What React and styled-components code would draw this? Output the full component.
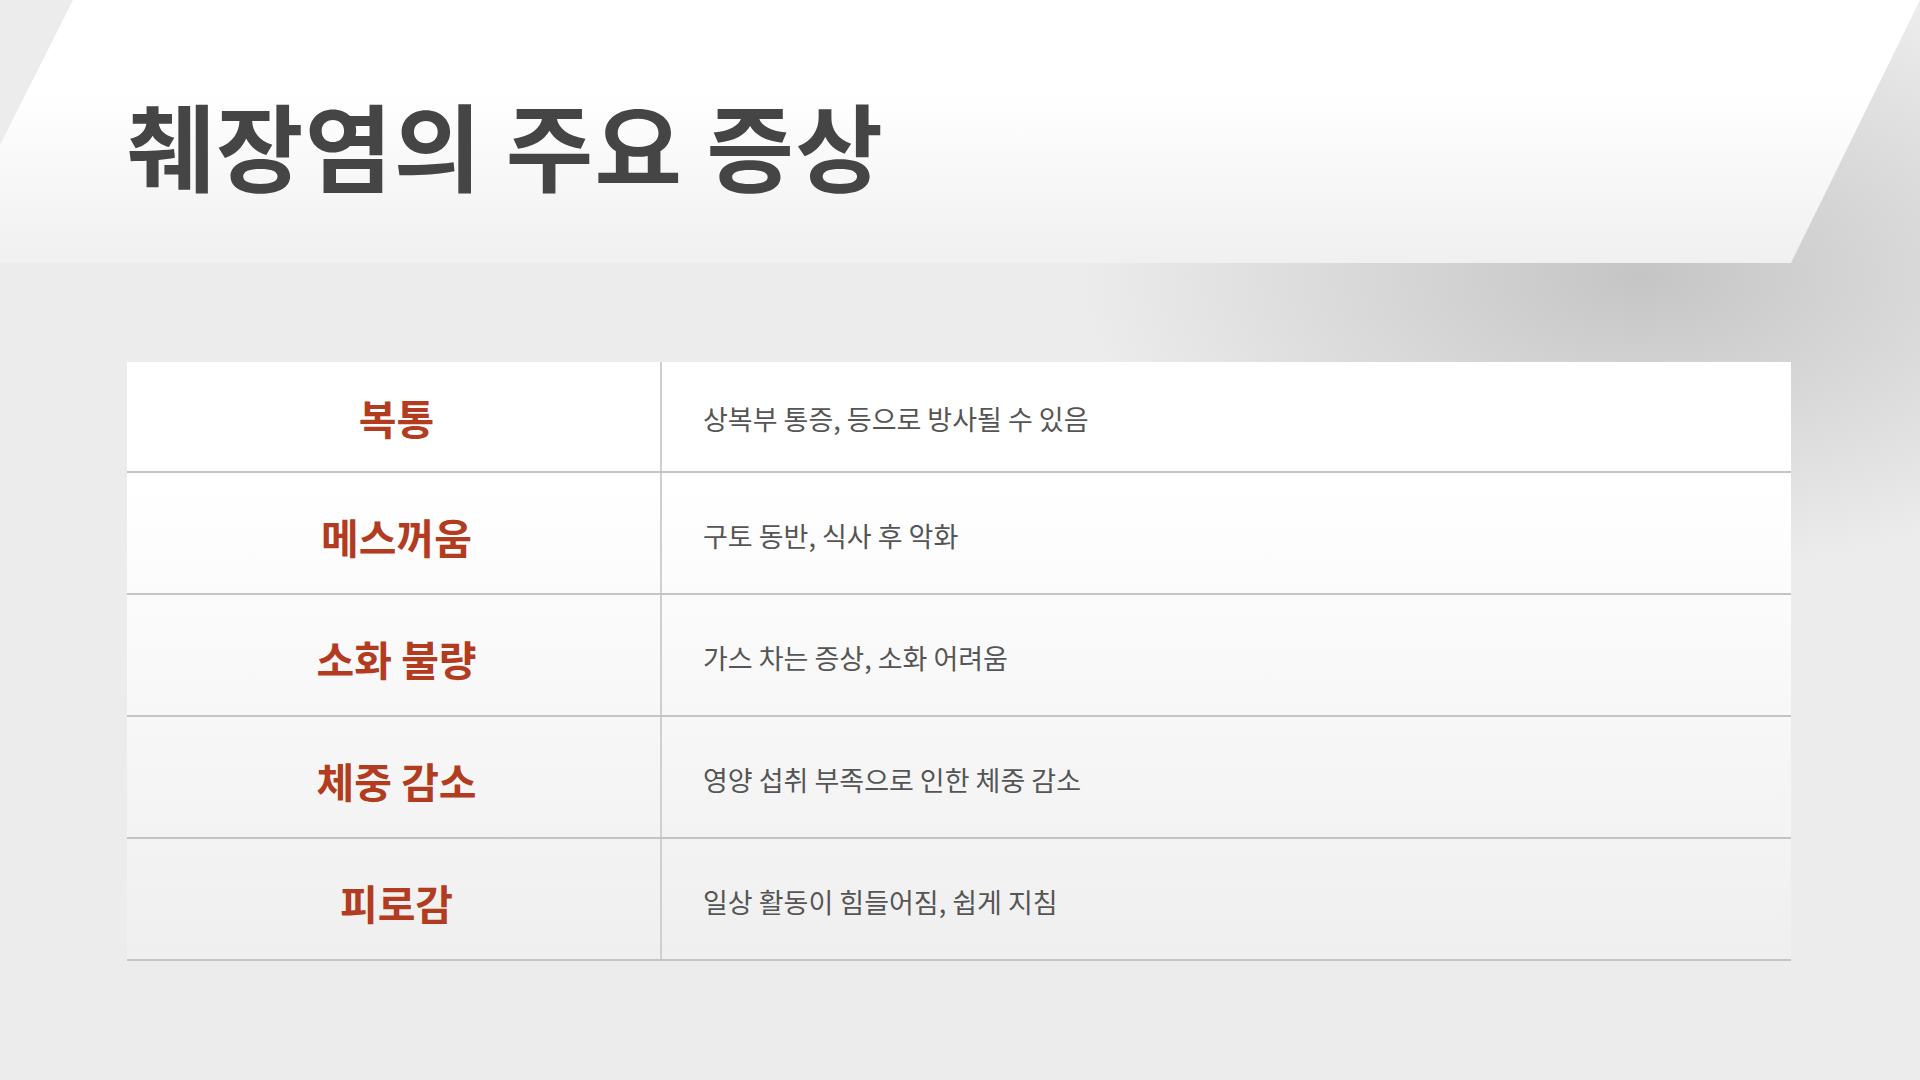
import styled, { createGlobalStyle } from 'styled-components';

const GlobalStyle = createGlobalStyle`
    html, body {
        margin: 0;
        padding: 0;
    }
    body {
        width: 1920px;
        height: 1080px;
        overflow: hidden;
        background-color: #ececec;
        background-image: radial-gradient(ellipse 560px 300px at 1640px 275px, #c5c5c5 0%, #ececec 100%);
        font-family: 'Noto Sans CJK KR', 'Noto Sans', sans-serif;
    }
`;

const sintomas = [
    { nome: '복통', desc: '상복부 통증, 등으로 방사될 수 있음' },
    { nome: '메스꺼움', desc: '구토 동반, 식사 후 악화' },
    { nome: '소화 불량', desc: '가스 차는 증상, 소화 어려움' },
    { nome: '체중 감소', desc: '영양 섭취 부족으로 인한 체중 감소' },
    { nome: '피로감', desc: '일상 활동이 힘들어짐, 쉽게 지침' },
];

export default function App(){
    return(
        <>
            <GlobalStyle />
            <Page>
                <Header>
                    <h1>췌장염의 주요 증상</h1>
                </Header>

                <Tabela>
                    {sintomas.map((s, i) => (
                        <Linha key={s.nome} $primeira={i === 0}>
                            <Nome $primeira={i === 0}>{s.nome}</Nome>
                            <Descricao>{s.desc}</Descricao>
                        </Linha>
                    ))}
                </Tabela>
            </Page>
        </>
    );
}

const Page = styled.div`
    width: 1920px;
    height: 1080px;
    display: flex;
    flex-direction: column;
`

const Header = styled.header`
    position: relative;
    height: 263px;
    padding-left: 127px;
    display: flex;
    align-items: center;
    box-sizing: border-box;

    &::before{
        content: '';
        position: absolute;
        inset: 0;
        background: linear-gradient(180deg, #ffffff 35%, #f0f0f0 100%);
        clip-path: polygon(73px 0, 100% 0, 1791px 100%, 0 100%, 0 145px);
    }

    h1{
        position: relative;
        margin: 0;
        margin-top: 24px;
        font-family: 'Noto Sans CJK KR', sans-serif;
        font-weight: 700;
        font-size: 95px;
        letter-spacing: 1.5px;
        color: #454545;
    }
`

const Tabela = styled.div`
    margin-top: 99px;
    margin-left: 127px;
    width: 1664px;
    background: linear-gradient(180deg, #ffffff 20%, #efefef 100%);
    display: flex;
    flex-direction: column;
`

const Linha = styled.div`
    display: grid;
    grid-template-columns: 535px 1fr;
    height: ${p => p.$primeira ? '109px' : '120px'};
    border-bottom: 2px solid #c4c4c4;
`

const Nome = styled.div`
    display: flex;
    align-items: center;
    justify-content: center;
    border-right: 2px solid #cfcfcf;
    font-weight: 700;
    font-size: 41px;
    color: #b23c1f;
    padding-top: ${p => p.$primeira ? '1px' : '6px'};
    padding-left: 6px;
`

const Descricao = styled.div`
    display: flex;
    align-items: center;
    padding-left: 41px;
    padding-top: 4px;
    font-weight: 400;
    font-size: 27px;
    color: #555555;
`
